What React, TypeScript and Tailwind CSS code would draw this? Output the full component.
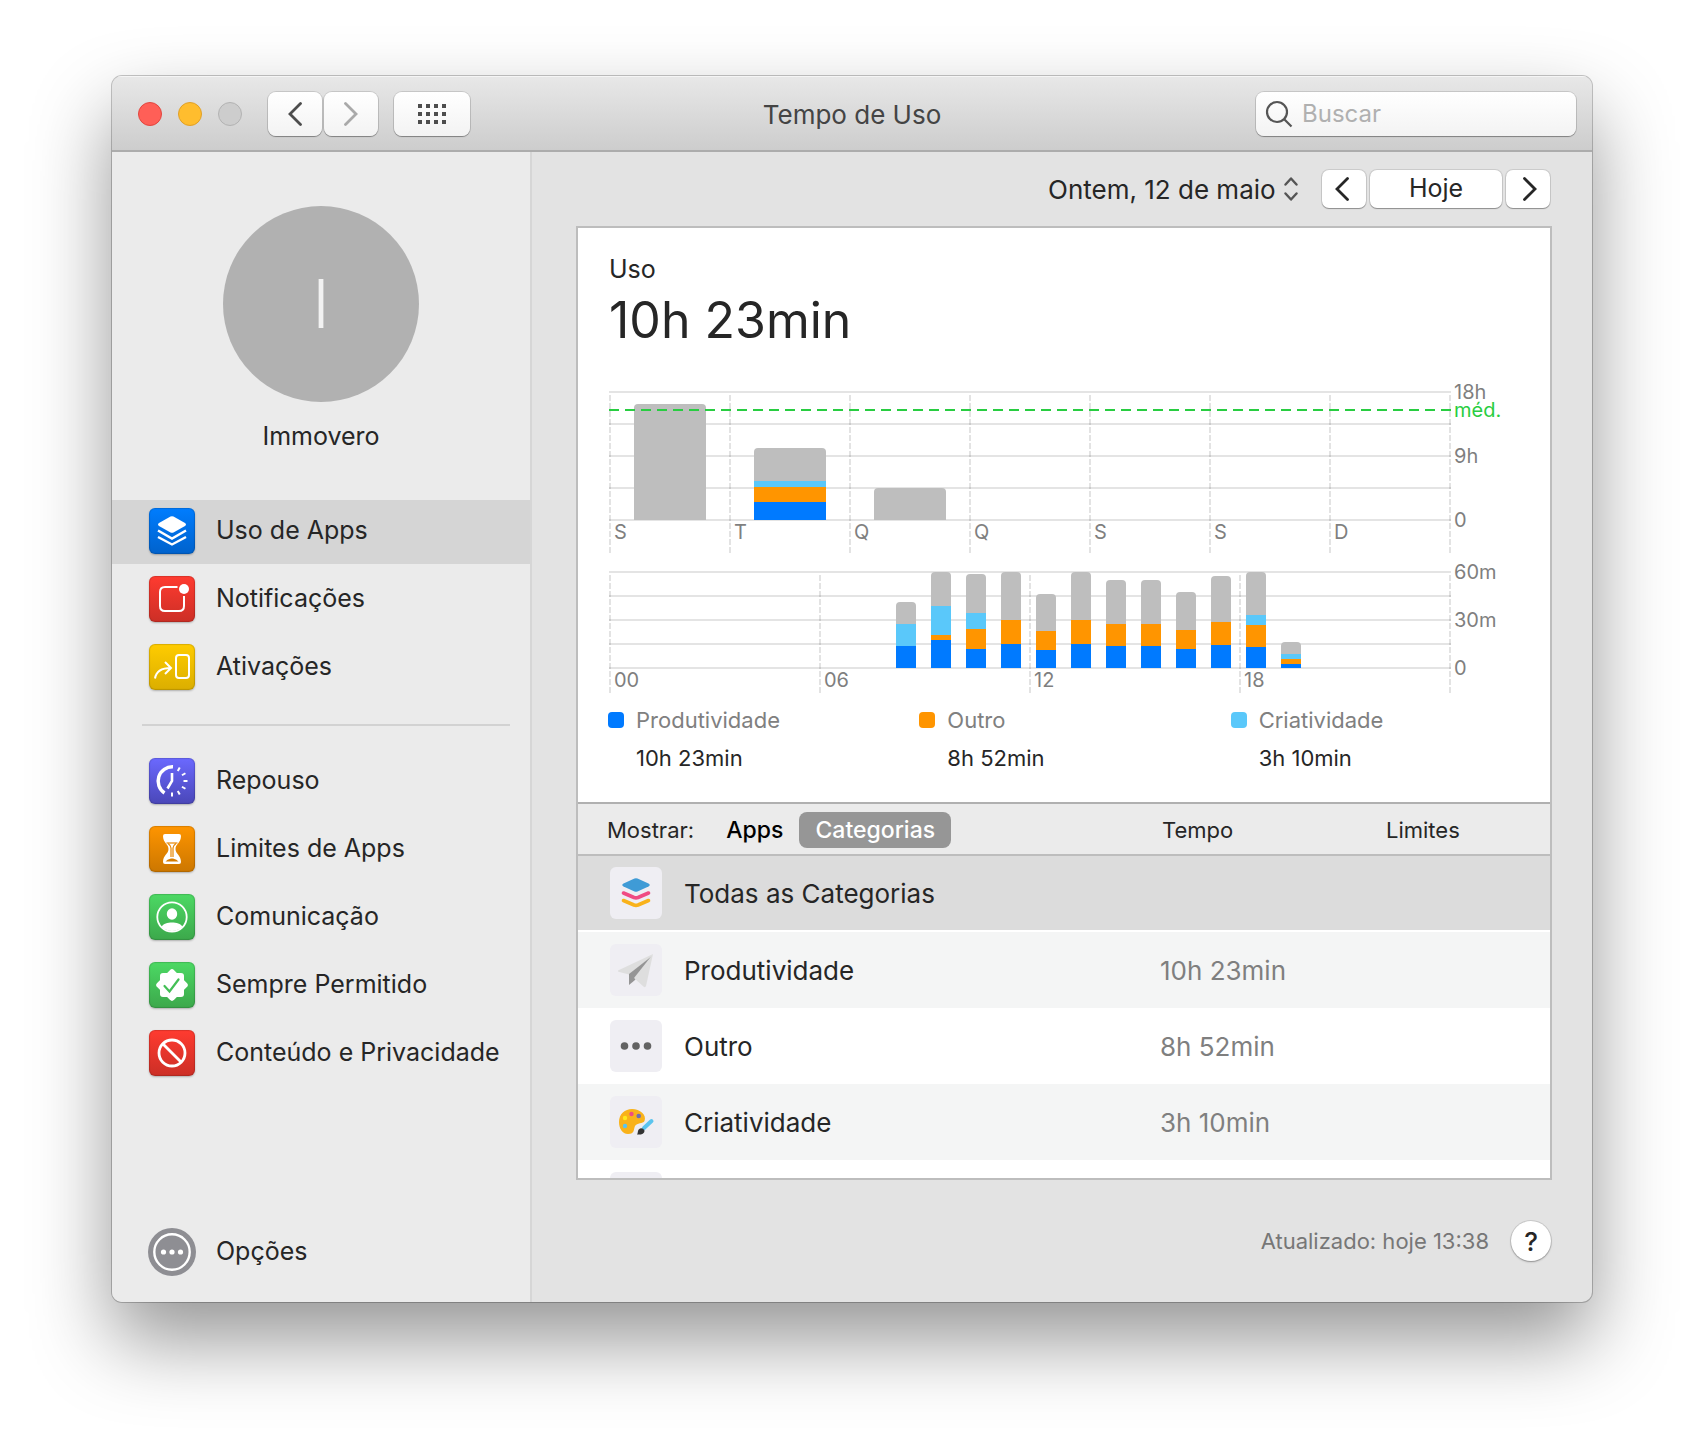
import React, { useState } from 'react';

const BLUE = '#007aff';
const ORANGE = '#ff9500';
const CYAN = '#5ac8fa';
const GRAY = '#bebebe';

type Bar = { slot: number; parts: [string, number][] };

// Segments run from the baseline up, heights in chart units
const weekBars: Bar[] = [
    { slot: 0, parts: [[GRAY, 116]] },
    { slot: 1, parts: [[BLUE, 18], [ORANGE, 15], [CYAN, 6], [GRAY, 33]] },
    { slot: 2, parts: [[GRAY, 32]] },
];

const dayBars: Bar[] = [
    { slot: 8, parts: [[BLUE, 22], [CYAN, 22], [GRAY, 22]] },
    { slot: 9, parts: [[BLUE, 28], [ORANGE, 5], [CYAN, 29], [GRAY, 34]] },
    { slot: 10, parts: [[BLUE, 19], [ORANGE, 20], [CYAN, 16], [GRAY, 39]] },
    { slot: 11, parts: [[BLUE, 24], [ORANGE, 24], [GRAY, 48]] },
    { slot: 12, parts: [[BLUE, 18], [ORANGE, 19], [GRAY, 37]] },
    { slot: 13, parts: [[BLUE, 24], [ORANGE, 24], [GRAY, 48]] },
    { slot: 14, parts: [[BLUE, 22], [ORANGE, 22], [GRAY, 44]] },
    { slot: 15, parts: [[BLUE, 22], [ORANGE, 22], [GRAY, 44]] },
    { slot: 16, parts: [[BLUE, 19], [ORANGE, 19], [GRAY, 38]] },
    { slot: 17, parts: [[BLUE, 23], [ORANGE, 23], [GRAY, 46]] },
    { slot: 18, parts: [[BLUE, 21], [ORANGE, 22], [CYAN, 10], [GRAY, 43]] },
    { slot: 19, parts: [[BLUE, 4], [ORANGE, 5], [CYAN, 5], [GRAY, 12]] },
];

type ChartProps = {
    id: string;
    label: string;
    height: number;
    top: number;
    step: number;
    tail: number;
    columns: string[];
    scale: [string, number][];
    bars: Bar[];
    slotWidth: number;
    barWidth: number;
    barOffset: number;
    average?: number;
};

const Chart: React.FC<ChartProps> = ({ id, label, height, top, step, tail, columns, scale, bars, slotWidth, barWidth, barOffset, average }) => {
    const base = top + step * 4;
    const columnWidth = 840 / columns.length;

    return (
        <svg viewBox={`0 0 910 ${height}`} className="block w-full h-auto" role="img" aria-label={label}>
            {[0, 1, 2, 3, 4].map((i) => (
                <path key={i} d={`M0 ${top + i * step}H842`} stroke="#e4e4e4" strokeWidth="2" />
            ))}
            {[...columns, ''].map((name, i) => (
                <g key={i}>
                    <path
                        d={`M${1 + i * columnWidth} ${top + 3}V${base + tail}`}
                        stroke="#000"
                        strokeOpacity="0.11"
                        strokeWidth="2"
                        strokeDasharray="6 2"
                    />
                    <text x={5 + i * columnWidth} y={base + 19} fontSize="20" fill="#7f7f7f">{name}</text>
                </g>
            ))}
            {bars.map((bar) => {
                const total = bar.parts.reduce((sum, part) => sum + part[1], 0);
                const x = bar.slot * slotWidth + barOffset;
                let y = base;
                return (
                    <g key={bar.slot} clipPath={`url(#${id}-${bar.slot})`}>
                        <clipPath id={`${id}-${bar.slot}`}>
                            <rect x={x} y={base - total} width={barWidth} height={total + 8} rx="4" />
                        </clipPath>
                        {bar.parts.map(([color, size]) => {
                            y -= size;
                            return <rect key={color} x={x} y={y} width={barWidth} height={size} fill={color} />;
                        })}
                    </g>
                );
            })}
            {average !== undefined && (
                <>
                    <path d={`M0 ${average}H842`} stroke="#28cd41" strokeWidth="2" strokeDasharray="10 6" />
                    <text x="845" y={average + 7} fontSize="20" fill="#28cd41">méd.</text>
                </>
            )}
            {scale.map(([name, row]) => (
                <text key={name} x="845" y={top + row * step + 7} fontSize="20" fill="#7f7f7f">{name}</text>
            ))}
        </svg>
    );
};

const navMain = [
    {
        name: 'Uso de Apps',
        tile: 'from-[#007dff] to-[#0062cc]',
        icon: (
            <>
                <path d="M21.5 8.6Q23 7.8 24.500 8.600L36 15Q38 16.500 36 18L24.500 24.400Q23 25.200 21.500 24.400L10 18Q8 16.500 10 15Z" fill="#fff" />
                <path d="M9 22.500L23 30.500L37 22.500M9 29L23 36.500L37 29" fill="none" stroke="#fff" strokeWidth="2.400" />
            </>
        ),
    },
    {
        name: 'Notificações',
        tile: 'from-[#ff3b30] to-[#cc2f26]',
        icon: (
            <>
                <path d="M28.500 11H16Q11 11 11 16V30Q11 35 16 35H30Q35 35 35 30V20" fill="none" stroke="#fff" strokeWidth="2" />
                <circle cx="35" cy="13" r="5" fill="#fff" />
            </>
        ),
    },
    {
        name: 'Ativações',
        tile: 'from-[#ffcc00] to-[#dbae00]',
        icon: (
            <g fill="none" stroke="#fff" strokeWidth="2">
                <rect x="27" y="11" width="13" height="23" rx="3" />
                <path d="M6 34.500C7 27.500 12 24 22 24M16 18L22 24L16 30" />
            </g>
        ),
    },
];

const navMore = [
    {
        name: 'Repouso',
        tile: 'from-[#6b69ff] to-[#4a47b8]',
        icon: (
            <g fill="none" stroke="#fff">
                <path d="M24 8.800A14.300 14.300 0 0 0 15.500 35" strokeWidth="3.500" />
                <path d="M23 15V23L18.500 30.500" strokeWidth="2.600" />
                {[30, 60, 90, 120, 150, 180].map((turn) => (
                    <path key={turn} d="M23 7.500V11.500" strokeWidth="2" transform={`rotate(${turn} 23 23)`} />
                ))}
            </g>
        ),
    },
    {
        name: 'Limites de Apps',
        tile: 'from-[#ff9500] to-[#cc7700]',
        icon: (
            <>
                <path d="M16 8H30Q32 8 32 10C32 17 26.500 18 26.500 23S32 29 32 36Q32 38 30 38H16Q14 38 14 36C14 29 19.500 28 19.500 23S14 17 14 10Q14 8 16 8Z" fill="#fff" />
                <path d="M17.500 17H28.500" fill="none" stroke="#e88700" strokeWidth="1.200" />
                <path d="M19 17.500Q22 19.500 22 22V31M27 17.500Q24 19.500 24 22V31" fill="none" stroke="#e88700" strokeWidth="1.200" />
                <path d="M16.500 35.500Q18 33.500 22 32.500H24Q28 33.500 29.500 35.500Z" fill="#d57c00" />
            </>
        ),
    },
    {
        name: 'Comunicação',
        tile: 'from-[#4cd964] to-[#3ca84b]',
        icon: (
            <>
                <circle cx="23" cy="23" r="14.700" fill="none" stroke="#fff" strokeWidth="1.800" />
                <ellipse cx="23" cy="20" rx="5.200" ry="5.800" fill="#fff" />
                <path d="M12.500 32.500C16 27 30 27 33.500 32.500A14.500 14.500 0 0 1 12.500 32.500Z" fill="#fff" />
            </>
        ),
    },
    {
        name: 'Sempre Permitido',
        tile: 'from-[#4cd964] to-[#3ca84b]',
        icon: (
            <>
                <g fill="#fff">
                    <rect x="11" y="11" width="24" height="24" rx="3" />
                    <rect x="11" y="11" width="24" height="24" rx="3" transform="rotate(45 23 23)" />
                </g>
                <path d="M15.500 24L20.500 29.500L29.500 17.500" fill="none" stroke="#43bf55" strokeWidth="2.200" strokeLinecap="round" />
            </>
        ),
    },
    {
        name: 'Conteúdo e Privacidade',
        tile: 'from-[#ff3b30] to-[#cc2f26]',
        icon: (
            <g fill="none" stroke="#fff" strokeWidth="2.800">
                <circle cx="23" cy="23" r="13" />
                <path d="M14 14L32 32" />
            </g>
        ),
    },
];

type NavItem = (typeof navMain)[number];

const NavLink: React.FC<{ item: NavItem; active: boolean; onSelect: (name: string) => void }> = ({ item, active, onSelect }) => (
    <li>
        <a
            href="#"
            onClick={() => onSelect(item.name)}
            className={`flex h-16 items-center gap-[21px] pb-0.5 pl-[37px] ${active ? 'bg-[#d5d5d5]' : ''}`}
        >
            <span className={`block size-[46px] shrink-0 rounded-[6px] bg-linear-to-b shadow-[inset_0_0_1px_1px_rgba(0,0,0,0.15),0_1px_2px_rgba(0,0,0,0.25)] ${item.tile}`}>
                <svg viewBox="0 0 46 46" className="size-full" aria-hidden="true">{item.icon}</svg>
            </span>
            <span className="whitespace-nowrap text-[25px]">{item.name}</span>
        </a>
    </li>
);

const legend = [
    { name: 'Produtividade', time: '10h 23min', dot: 'bg-[#007aff]' },
    { name: 'Outro', time: '8h 52min', dot: 'bg-[#ff9500]' },
    { name: 'Criatividade', time: '3h 10min', dot: 'bg-[#5ac8fa]' },
];

const categories = [
    {
        name: 'Produtividade',
        time: '10h 23min',
        icon: (
            <>
                <path d="M43 10L8 26.500Q7.500 27.500 8.500 27.700L19 30.500L41 13Z" fill="#dedede" />
                <path d="M42 12L19 30V41L25 36Z" fill="#959595" />
                <path d="M43 10L24 34L34 43Q35.500 43.500 36 42Z" fill="#dedede" />
            </>
        ),
    },
    {
        name: 'Outro',
        time: '8h 52min',
        icon: (
            <g fill="#636363">
                <circle cx="14.500" cy="26" r="3.800" />
                <circle cx="26" cy="26" r="3.800" />
                <circle cx="37.500" cy="26" r="3.800" />
            </g>
        ),
    },
    {
        name: 'Criatividade',
        time: '3h 10min',
        icon: (
            <>
                <path d="M22 13C30 13 37 19 34.500 25C33 28 27 26.500 25 30C23.500 33 25 38 18 38C12 38 9 32 9 26C9 18 15 13 22 13Z" fill="#f9b21a" />
                <circle cx="21.500" cy="18" r="2.200" fill="#f04b83" />
                <circle cx="28.700" cy="20" r="2.300" fill="#6f6fb0" />
                <circle cx="15" cy="22" r="2.200" fill="#ffe81f" />
                <circle cx="15" cy="30" r="2.200" fill="#5bc4ee" />
                <path d="M41.500 25L34 32" stroke="#5bc4ee" strokeWidth="4" strokeLinecap="round" />
                <path d="M34.500 34.500C34.500 38 31 39 27 38.500C28.500 37 27 34 30 32.500Q33 31.500 34.500 34.500Z" fill="#333" />
            </>
        ),
    },
];

const CategoryTile: React.FC<{ children?: React.ReactNode }> = ({ children }) => (
    <span className="block size-[52px] shrink-0 rounded-[6px] bg-[#efeef3]">
        <svg viewBox="0 0 52 52" className="size-full" aria-hidden="true">{children}</svg>
    </span>
);

const toolbarButton =
    'flex h-11 items-center justify-center rounded-[8px] bg-linear-to-b from-white to-[#f3f3f3] shadow-[0_0_0_1px_rgba(0,0,0,0.12),0_1px_1px_rgba(0,0,0,0.3)]';
const dateButton =
    'flex h-[38px] items-center justify-center rounded-[7px] bg-white text-[25px] shadow-[0_0_0_1px_rgba(0,0,0,0.1),0_1px_1px_rgba(0,0,0,0.3)]';
const headCell = 'h-[54px] border-t-2 border-b-2 border-t-[#b0b0b0] border-b-[#bdbdbd] pt-0.5 font-normal';

const App: React.FC = () => {
    const [section, setSection] = useState('Uso de Apps');

    return (
        <div className="min-h-screen bg-white px-28 pt-[76px] pb-[148px] font-['Inter','Liberation_Sans',sans-serif] text-[#262626]">
            <div className="overflow-hidden rounded-[10px] bg-[#e3e3e3] shadow-[0_0_0_1px_rgba(0,0,0,0.22),0_38px_80px_rgba(0,0,0,0.42)]">
                {/* Title bar */}
                <header className="grid h-[76px] grid-cols-[1fr_auto_1fr] items-center border-b-2 border-[#acacac] bg-linear-to-b from-[#e8e8e8] to-[#cdcdcd] px-4 pt-0.5 shadow-[inset_0_1px_0_#f5f5f5]">
                    <div className="flex items-center">
                        <div className="flex gap-4 pl-[10px]">
                            <button aria-label="Fechar" className="size-6 rounded-full border border-[#e2463f] bg-[#ff5f57]"></button>
                            <button aria-label="Minimizar" className="size-6 rounded-full border border-[#e0a028] bg-[#ffbd2e]"></button>
                            <button aria-label="Ampliar" disabled className="size-6 rounded-full border border-[#b3b3b3] bg-[#cdcdcd]"></button>
                        </div>
                        <div className="ml-[26px] flex gap-0.5">
                            <button aria-label="Voltar" className={`w-[54px] ${toolbarButton}`}>
                                <svg viewBox="0 0 14 24" className="h-6 w-3.5" fill="none" stroke="#4d4d4d" strokeWidth="2.800" strokeLinecap="round">
                                    <path d="M12.500 1.500L2 12L12.500 22.500" />
                                </svg>
                            </button>
                            <button aria-label="Avançar" disabled className={`w-[54px] ${toolbarButton}`}>
                                <svg viewBox="0 0 14 24" className="h-6 w-3.5" fill="none" stroke="#a9a9a9" strokeWidth="2.800" strokeLinecap="round">
                                    <path d="M1.500 1.500L12 12L1.500 22.500" />
                                </svg>
                            </button>
                        </div>
                        <button aria-label="Mostrar tudo" className={`ml-4 w-[76px] ${toolbarButton}`}>
                            <svg viewBox="0 0 28 20" className="h-5 w-7" fill="#4d4d4d">
                                {[0, 8, 16].map((y) => [0, 8, 16, 24].map((x) => <rect key={`${x}-${y}`} x={x} y={y} width="4" height="4" />))}
                            </svg>
                        </button>
                    </div>
                    <h1 className="text-[26px] text-[#444]">Tempo de Uso</h1>
                    <label className={`w-[320px] justify-self-end px-[9px] ${toolbarButton}`}>
                        <svg viewBox="0 0 28 28" className="size-7 shrink-0" fill="none" stroke="#555" strokeWidth="2.200">
                            <circle cx="12" cy="12" r="10" />
                            <path d="M19 19L26.500 26.500" />
                        </svg>
                        <input
                            type="search"
                            aria-label="Buscar"
                            placeholder="Buscar"
                            className="ml-[9px] w-full min-w-0 bg-transparent text-2xl outline-none placeholder:text-[#b0b0b0]"
                        />
                    </label>
                </header>

                <div className="flex">
                    {/* Sidebar */}
                    <aside className="flex w-[420px] shrink-0 flex-col border-r-2 border-[#d6d6d6] bg-[#ebebeb] pb-[26px]">
                        <div className="flex flex-col items-center pt-[54px]">
                            <div className="flex size-[196px] items-center justify-center rounded-full bg-[#b1b1b1] text-[67px] font-light text-[#f2f2f2]">I</div>
                            <p className="mt-4 text-[25px] leading-9">Immovero</p>
                        </div>
                        <nav className="mt-[46px]">
                            <ul className="flex flex-col gap-1">
                                {navMain.map((item) => (
                                    <NavLink key={item.name} item={item} active={section === item.name} onSelect={setSection} />
                                ))}
                            </ul>
                            <hr className="mt-6 mr-5 mb-6 ml-[30px] border-t-2 border-[#d2d2d2]" />
                            <ul className="flex flex-col gap-1">
                                {navMore.map((item) => (
                                    <NavLink key={item.name} item={item} active={section === item.name} onSelect={setSection} />
                                ))}
                            </ul>
                        </nav>
                        <a href="#" className="mt-auto flex items-center gap-5 pl-9">
                            <svg viewBox="0 0 48 48" className="size-12" aria-hidden="true">
                                <circle cx="24" cy="24" r="24" fill="#8e8e93" />
                                <circle cx="24" cy="24" r="17.700" fill="none" stroke="#fff" strokeWidth="2.400" />
                                <g fill="#fff">
                                    <circle cx="15.500" cy="24" r="2.600" />
                                    <circle cx="24" cy="24" r="2.600" />
                                    <circle cx="32.500" cy="24" r="2.600" />
                                </g>
                            </svg>
                            <span className="text-[25px]">Opções</span>
                        </a>
                    </aside>

                    {/* Content */}
                    <main className="min-w-0 flex-1 pt-[18px] pr-10 pb-[41px] pl-11">
                        <div className="flex h-[38px] items-center justify-end pr-0.5">
                            <label className="mr-6 flex items-center gap-2">
                                <select aria-label="Data" className="appearance-none bg-transparent text-[26px] outline-none">
                                    <option>Ontem, 12 de maio</option>
                                </select>
                                <svg viewBox="0 0 14 24" className="h-6 w-3.5" fill="none" stroke="#555" strokeWidth="2.400" strokeLinecap="round" strokeLinejoin="round">
                                    <path d="M1.500 7.500L7 1.500L12.500 7.500M1.500 16.500L7 22.500L12.500 16.500" />
                                </svg>
                            </label>
                            <div className="flex gap-1">
                                <button aria-label="Dia anterior" className={`w-11 pr-1 ${dateButton}`}>
                                    <svg viewBox="0 0 14 24" className="h-6 w-3.5" fill="none" stroke="#262626" strokeWidth="2.800" strokeLinecap="round">
                                        <path d="M12.500 1.500L2 12L12.500 22.500" />
                                    </svg>
                                </button>
                                <button className={`w-[132px] ${dateButton}`}>Hoje</button>
                                <button aria-label="Próximo dia" className={`w-11 pl-1 ${dateButton}`}>
                                    <svg viewBox="0 0 14 24" className="h-6 w-3.5" fill="none" stroke="#262626" strokeWidth="2.800" strokeLinecap="round">
                                        <path d="M1.500 1.500L12 12L1.500 22.500" />
                                    </svg>
                                </button>
                            </div>
                        </div>

                        <section className="mt-[18px] border-2 border-[#bdbdbd] bg-white">
                            <div className="px-[31px] pt-[22px]">
                                <h2 className="text-[25px] leading-[38px]">Uso</h2>
                                <p className="text-[50px] leading-16">10h 23min</p>
                                <div className="mt-5">
                                    <Chart
                                        id="week"
                                        label="Uso por dia da semana"
                                        height={188}
                                        top={20}
                                        step={32}
                                        tail={33}
                                        columns={['S', 'T', 'Q', 'Q', 'S', 'S', 'D']}
                                        scale={[['18h', 0], ['9h', 2], ['0', 4]]}
                                        bars={weekBars}
                                        slotWidth={120}
                                        barWidth={72}
                                        barOffset={25}
                                        average={38}
                                    />
                                    <Chart
                                        id="day"
                                        label="Uso por hora"
                                        height={140}
                                        top={12}
                                        step={24}
                                        tail={25}
                                        columns={['00', '06', '12', '18']}
                                        scale={[['60m', 0], ['30m', 2], ['0', 4]]}
                                        bars={dayBars}
                                        slotWidth={35}
                                        barWidth={20}
                                        barOffset={7}
                                    />
                                </div>
                            </div>
                            <div className="mt-1.5 grid grid-cols-3 pr-2 pb-[30px] pl-[30px] text-[22px] leading-7">
                                {legend.map((item) => (
                                    <div key={item.name}>
                                        <div className="flex items-center gap-3 text-[#808080]">
                                            <span className={`size-4 rounded-[4px] ${item.dot}`}></span>
                                            {item.name}
                                        </div>
                                        <div className="mt-[10px] pl-7">{item.time}</div>
                                    </div>
                                ))}
                            </div>

                            {/* Category list, the last visible row is cut off by the panel */}
                            <div className="h-[376px] overflow-hidden">
                                <table className="w-full table-fixed border-separate border-spacing-0 text-left text-[26px]">
                                    <thead className="bg-[#ebebeb] text-[22px]">
                                        <tr>
                                            <th className={`pl-[29px] ${headCell}`}>
                                                <div className="flex items-center">
                                                    Mostrar:
                                                    <button className="ml-5 h-9 px-3 text-[23px] font-medium text-black">Apps</button>
                                                    <button className="ml-1 h-9 w-[152px] rounded-[8px] bg-[#969696] text-[23px] font-medium text-white">Categorias</button>
                                                </div>
                                            </th>
                                            <th className={`w-[224px] pl-0.5 ${headCell}`}>Tempo</th>
                                            <th className={`w-[166px] pl-0.5 ${headCell}`}>Limites</th>
                                        </tr>
                                    </thead>
                                    <tbody>
                                        <tr className="bg-[#dcdcdc]">
                                            <td colSpan={3} className="h-[76px] border-b-2 border-white pl-8">
                                                <div className="flex items-center gap-[22px]">
                                                    <CategoryTile>
                                                        <path d="M24.500 11.500Q26 11 27.500 11.500L38.500 16.500Q41 18 38.500 19.500L27.500 24.500Q26 25 24.500 24.500L13.500 19.500Q11 18 13.500 16.500Z" fill="#3f9bd6" />
                                                        <g fill="none" strokeWidth="3.600" strokeLinecap="round" strokeLinejoin="round">
                                                            <path d="M13.500 26L24 30.500Q26 31.200 28 30.500L38.500 26" stroke="#f04b83" />
                                                            <path d="M13.500 33.500L24 38Q26 38.700 28 38L38.500 33.500" stroke="#f9b21a" />
                                                        </g>
                                                    </CategoryTile>
                                                    Todas as Categorias
                                                </div>
                                            </td>
                                        </tr>
                                        {categories.map((item) => (
                                            <tr key={item.name} className="odd:bg-white even:bg-[#f4f5f5]">
                                                <td className="h-[76px] pl-8">
                                                    <div className="flex items-center gap-[22px]">
                                                        <CategoryTile>{item.icon}</CategoryTile>
                                                        {item.name}
                                                    </div>
                                                </td>
                                                <td className="text-[#7f7f7f]">{item.time}</td>
                                                <td></td>
                                            </tr>
                                        ))}
                                        <tr className="bg-white">
                                            <td colSpan={3} className="h-[76px] pl-8"><CategoryTile /></td>
                                        </tr>
                                    </tbody>
                                </table>
                            </div>
                        </section>

                        <footer className="mt-[41px] flex items-center justify-end gap-[22px] pr-px">
                            <p className="text-[22px] text-[#777]">Atualizado: hoje 13:38</p>
                            <button
                                aria-label="Ajuda"
                                className="size-10 rounded-full bg-white text-[26px] font-medium shadow-[0_0_0_1px_rgba(0,0,0,0.1),0_1px_2px_rgba(0,0,0,0.3)]"
                            >
                                ?
                            </button>
                        </footer>
                    </main>
                </div>
            </div>
        </div>
    );
};

export default App;
